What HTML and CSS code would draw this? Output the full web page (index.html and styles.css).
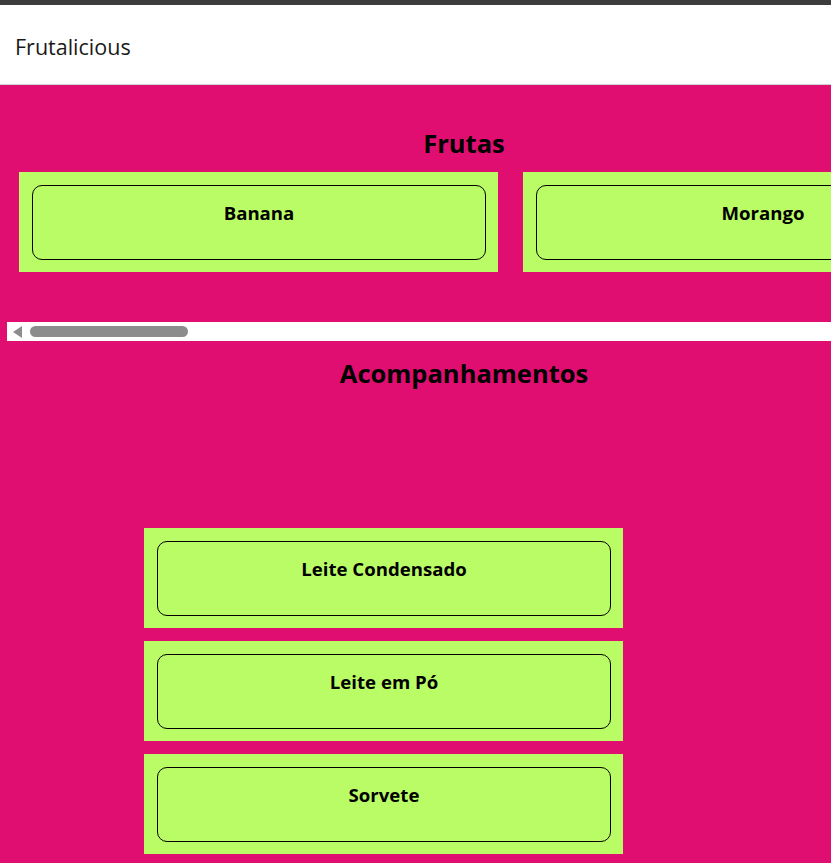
FILE: index.html
```html
<!DOCTYPE html>
<html lang="pt">
<head>
<meta charset="utf-8">
<title>Frutalicious</title>
<link rel="stylesheet" href="styles.css">
</head>
<body>
<div class="topbar"></div>
<header class="header"><span class="brand">Frutalicious</span></header>
<main class="main">
  <section class="section frutas">
    <h2 class="section-title">Frutas</h2>
    <div class="scroller">
      <div class="row">
        <div class="card"><div class="card-inner"><h3 class="card-title">Banana</h3></div></div>
        <div class="card"><div class="card-inner"><h3 class="card-title">Morango</h3></div></div>
        <div class="card"><div class="card-inner"><h3 class="card-title">Uva</h3></div></div>
      </div>
      <div class="scrollbar">
        <span class="arrow"></span>
        <span class="thumb"></span>
      </div>
    </div>
  </section>
  <section class="section acomp">
    <h2 class="section-title">Acompanhamentos</h2>
    <div class="column">
      <div class="card"><div class="card-inner"><h3 class="card-title">Leite Condensado</h3></div></div>
      <div class="card"><div class="card-inner"><h3 class="card-title">Leite em Pó</h3></div></div>
      <div class="card"><div class="card-inner"><h3 class="card-title">Sorvete</h3></div></div>
    </div>
  </section>
</main>
</body>
</html>
```
FILE: styles.css
```css
html, body {
  margin: 0;
  padding: 0;
  overflow: hidden;
  background: #e00e71;
  font-family: "Open Sans", "Noto Sans", sans-serif;
}
.topbar {
  height: 5px;
  background: #3c3c3c;
}
.header {
  height: 79px;
  background: #ffffff;
  border-bottom: 1px solid #d2d2d2;
  display: flex;
  align-items: center;
  padding-left: 15px;
}
.brand {
  font-size: 21.5px;
  color: #1a1a1a;
  margin-top: 3px;
}
.main {
  width: 928px;
  background: #e00e71;
  padding-bottom: 40px;
}
.section-title {
  margin: 0;
  text-align: center;
  font-size: 25.5px;
  font-weight: 700;
  color: #000;
  line-height: 30px;
}
.frutas {
  padding-top: 43px;
}
.frutas .section-title {
  margin-bottom: 14px;
}
.scroller {
  margin: 0 7px;
  overflow: hidden;
}
.row {
  display: flex;
  gap: 25px;
  padding: 0 12px;
  margin-bottom: 50px;
}
.card {
  flex: 0 0 auto;
  width: 479px;
  box-sizing: border-box;
  background: #bafc66;
  padding: 13px 12px 12px 13px;
}
.card-inner {
  height: 75px;
  box-sizing: border-box;
  border: 1px solid #000;
  border-radius: 10px;
  padding-top: 14px;
}
.card-title {
  margin: 0;
  text-align: center;
  font-size: 18.6px;
  font-weight: 700;
  line-height: 26px;
  color: #000;
}
.scrollbar {
  height: 19px;
  background: #ffffff;
  display: flex;
  align-items: center;
}
.arrow {
  width: 0;
  height: 0;
  margin-left: 6px;
  border-top: 6px solid transparent;
  border-bottom: 6px solid transparent;
  border-right: 9px solid #8c8c8c;
}
.thumb {
  margin-left: 8px;
  width: 158px;
  height: 11px;
  border-radius: 6px;
  background: #8c8c8c;
}
.acomp {
  padding-top: 17px;
}
.column {
  display: flex;
  flex-direction: column;
  gap: 13px;
  padding-left: 144px;
  margin-top: 140px;
}
```
